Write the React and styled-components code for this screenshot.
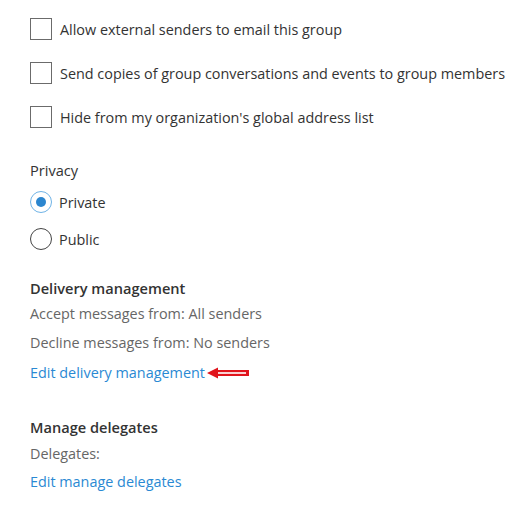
import styled, { createGlobalStyle } from 'styled-components';

const GlobalStyle = createGlobalStyle`
  body {
    margin: 0;
    background: #ffffff;
    font-family: "Open Sans", "Liberation Sans", sans-serif;
  }
`;

const Page = styled.div`
  padding: 18px 0 0 30px;
  width: 514px;
  height: 505px;
  box-sizing: border-box;
  color: #333333;
`;

const CheckList = styled.div`
  display: flex;
  flex-direction: column;
  gap: 22px;
`;

const CheckRow = styled.label`
  display: flex;
  align-items: center;
  gap: 8px;
  height: 22px;
  font-size: 14.4px;
  white-space: nowrap;
`;

const Box = styled.span`
  width: 20px;
  height: 20px;
  border: 1px solid #6b6b6b;
  flex-shrink: 0;
`;

const SectionTitle = styled.div`
  font-size: 14.6px;
  line-height: 20px;
  margin-top: ${(p) => p.$top}px;
  font-weight: ${(p) => (p.$bold ? 600 : 400)};
  color: #333333;
`;

const RadioRow = styled.div`
  display: flex;
  align-items: center;
  gap: 7px;
  height: 22px;
  margin-top: ${(p) => p.$top}px;
  font-size: 14.4px;
`;

const Radio = styled.span`
  width: 20px;
  height: 20px;
  border-radius: 50%;
  border: 1px solid ${(p) => (p.$checked ? '#6fb3e6' : '#444444')};
  display: flex;
  align-items: center;
  justify-content: center;
  flex-shrink: 0;

  &::after {
    content: '';
    display: ${(p) => (p.$checked ? 'block' : 'none')};
    width: 10px;
    height: 10px;
    border-radius: 50%;
    background: #2b86cf;
  }
`;

const Line = styled.div`
  font-size: 14.4px;
  line-height: 20px;
  margin-top: ${(p) => p.$top}px;
  color: #666666;
`;

const Link = styled.a`
  display: flex;
  align-items: center;
  font-size: 14.4px;
  line-height: 20px;
  margin-top: ${(p) => p.$top}px;
  color: #2a89d3;
  text-decoration: none;
  gap: 1px;
`;

const Arrow = () => (
  <svg width="44" height="12" viewBox="0 0 44 12">
    <polygon points="1,6 12,0.5 12,3 43,3 43,9 12,9 12,11.5" fill="#e0141c" />
    <line x1="12" y1="6" x2="40" y2="6" stroke="#ffffff" strokeWidth="1.6" />
  </svg>
);

const App = () => {
  const options = [
    'Allow external senders to email this group',
    'Send copies of group conversations and events to group members',
    "Hide from my organization's global address list",
  ];

  return (
    <>
      <GlobalStyle />
      <Page>
        <CheckList>
          {options.map((text) => (
            <CheckRow key={text}>
              <Box />
              {text}
            </CheckRow>
          ))}
        </CheckList>

        <SectionTitle $top={32}>Privacy</SectionTitle>
        <RadioRow $top={11}>
          <Radio $checked />
          Private
        </RadioRow>
        <RadioRow $top={15}>
          <Radio />
          Public
        </RadioRow>

        <SectionTitle $top={28} $bold>Delivery management</SectionTitle>
        <Line $top={6}>Accept messages from: All senders</Line>
        <Line $top={9}>Decline messages from: No senders</Line>
        <Link $top={10}>
          Edit delivery management
          <Arrow />
        </Link>

        <SectionTitle $top={34} $bold>Manage delegates</SectionTitle>
        <Line $top={7}>Delegates:</Line>
        <Link $top={8}>Edit manage delegates</Link>
      </Page>
    </>
  );
};

export default App;
